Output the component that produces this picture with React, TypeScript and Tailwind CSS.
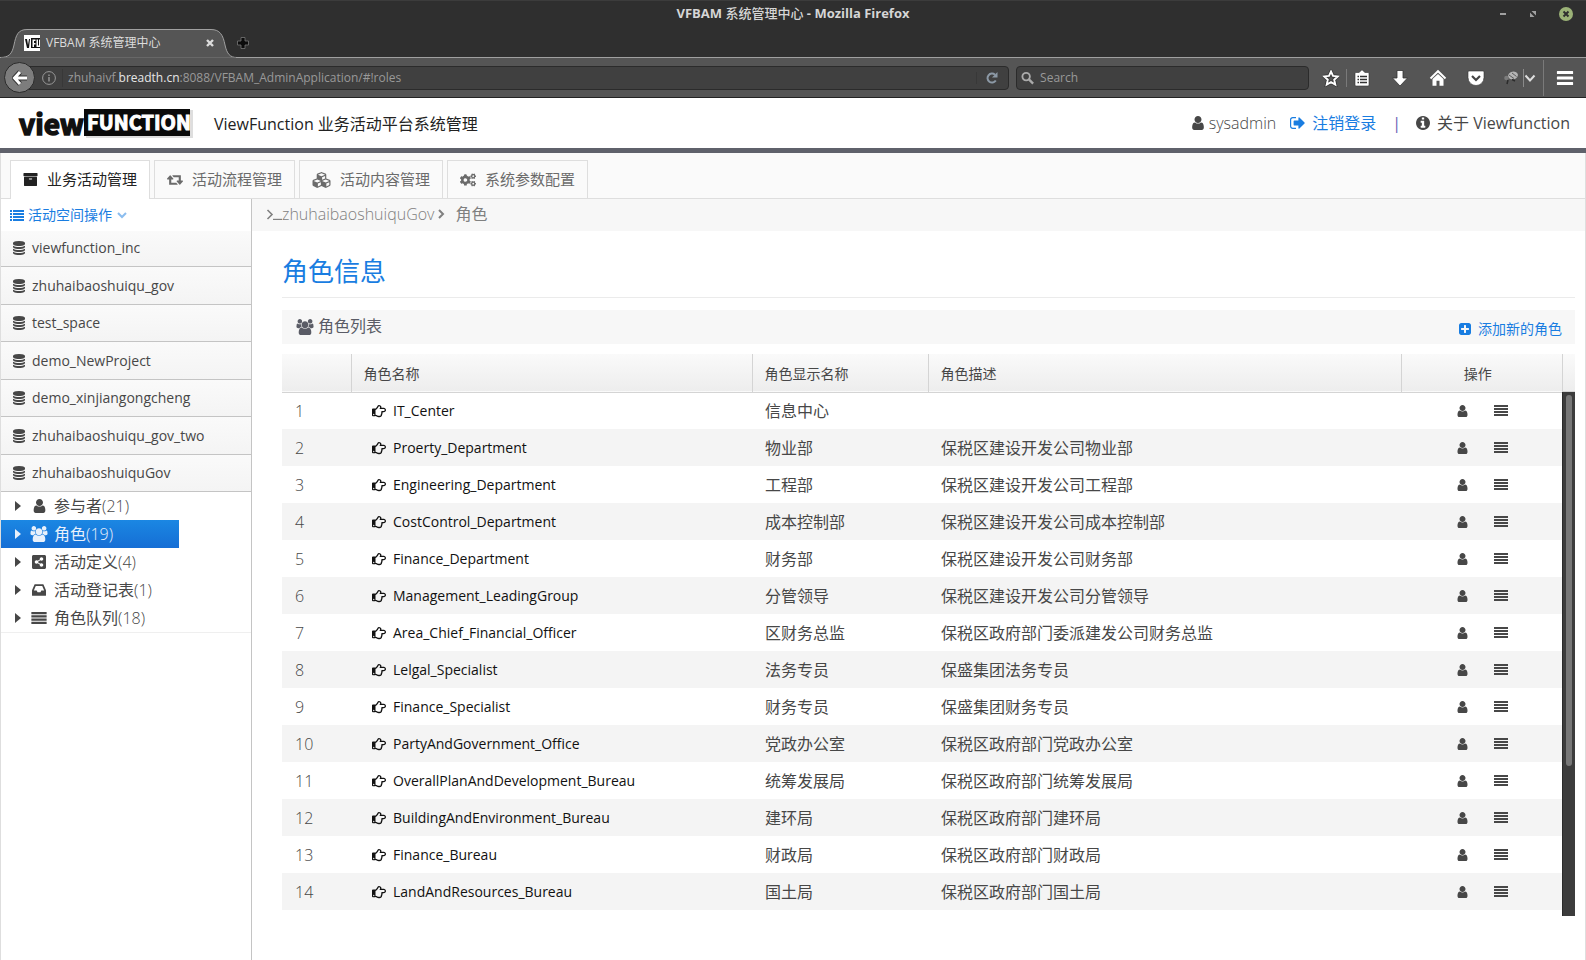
import { useState } from "react";
import type { ReactNode } from "react";
import { FaCogs, FaCubes, FaRegHandPointRight, FaShareAltSquare } from "react-icons/fa";

type IconProps = { className?: string };

function Glyph({ d, box, className }: { d: string; box: string; className?: string }) {
	return (
		<svg viewBox={box} fill="currentColor" className={className} aria-hidden="true">
			<path d={d} />
		</svg>
	);
}

const UserIcon = ({ className }: IconProps) => (
	<Glyph
		className={className}
		box="0 0 1280 1536"
		d="M1280 1271q0 109-62.5 187t-150.5 78h-854q-88 0-150.5-78t-62.5-187q0-85 8.5-160.5t31.5-152 58.5-131 94-89 134.5-34.5q131 128 313 128t313-128q76 0 134.5 34.5t94 89 58.5 131 31.5 152 8.5 160.5zm-256-887q0 159-112.5 271.5t-271.5 112.5-271.5-112.5-112.5-271.5 112.5-271.5 271.5-112.5 271.5 112.5 112.5 271.5z"
	/>
);

const UsersIcon = ({ className }: IconProps) => (
	<Glyph
		className={className}
		box="0 0 1920 1792"
		d="M593 896q-162 5-265 128H194q-82 0-138-40.5T0 865q0-353 124-353 6 0 43.5 21t97.5 42.5T384 597q67 0 133-23-5 37-5 66 0 139 81 256zm1071 637q0 120-73 189.5t-194 69.5H523q-121 0-194-69.5T256 1533q0-53 3.5-103.5t14-109T300 1212t43-97.5 62-81 85.5-53.5T602 960q10 0 43 21.5t73 48 107 48 135 21.5 135-21.5 107-48 73-48 43-21.5q61 0 111.5 20t85.5 53.5 62 81 43 97.5 26.5 108.5 14 109 3.5 103.5zM640 256q0 106-75 181t-181 75-181-75-75-181 75-181T384 0t181 75 75 181zm704 384q0 159-112.5 271.5T960 1024 688.5 911.5 576 640t112.5-271.5T960 256t271.5 112.5T1344 640zm576 225q0 78-56 118.5t-138 40.5h-134q-103-123-265-128 81-117 81-256 0-29-5-66 66 23 133 23 59 0 119-21.5t97.5-42.5 43.5-21q124 0 124 353zm-128-609q0 106-75 181t-181 75-181-75-75-181 75-181 181-75 181 75 75 181z"
	/>
);

const DatabaseIcon = ({ className }: IconProps) => (
	<Glyph
		className={className}
		box="128 0 1536 1792"
		d="M896 768q237 0 443-43t325-127v170q0 69-103 128t-280 93.5-385 34.5-385-34.5-280-93.5-103-128v-170q119 84 325 127t443 43zm0 768q237 0 443-43t325-127v170q0 69-103 128t-280 93.5-385 34.5-385-34.5-280-93.5-103-128v-170q119 84 325 127t443 43zm0-384q237 0 443-43t325-127v170q0 69-103 128t-280 93.5-385 34.5-385-34.5-280-93.5-103-128v-170q119 84 325 127t443 43zm0-1152q208 0 385 34.5t280 93.5 103 128v128q0 69-103 128t-280 93.5-385 34.5-385-34.5-280-93.5-103-128v-128q0-69 103-128t280-93.5 385-34.5z"
	/>
);

const ArchiveIcon = ({ className }: IconProps) => (
	<Glyph
		className={className}
		box="64 128 1664 1536"
		d="M1088 832q0-26-19-45t-45-19h-256q-26 0-45 19t-19 45 19 45 45 19h256q26 0 45-19t19-45zm576-192v960q0 26-19 45t-45 19h-1408q-26 0-45-19t-19-45v-960q0-26 19-45t45-19h1408q26 0 45 19t19 45zm64-448v256q0 26-19 45t-45 19h-1536q-26 0-45-19t-19-45v-256q0-26 19-45t45-19h1536q26 0 45 19t19 45z"
	/>
);

const RetweetIcon = ({ className }: IconProps) => (
	<Glyph
		className={className}
		box="0 384 1920 1152"
		d="M1280 1504q0 13-9.5 22.5t-22.5 9.5h-960q-8 0-13.5-2t-9-7-5.5-8-3-11.5-1-11.5v-600h-192q-26 0-45-19t-19-45q0-24 15-41l320-384q19-22 49-22t49 22l320 384q15 17 15 41 0 26-19 45t-45 19h-192v384h576q16 0 25 11l160 192q7 10 7 21zm640-416q0 24-15 41l-320 384q-20 23-49 23t-49-23l-320-384q-15-17-15-41 0-26 19-45t45-19h192v-384h-576q-16 0-25-12l-160-192q-7-9-7-20 0-13 9.5-22.5t22.5-9.5h960q8 0 13.5 2t9 7 5.5 8 3 11.5 1 11.5v600h192q26 0 45 19t19 45z"
	/>
);

const InboxIcon = ({ className }: IconProps) => (
	<Glyph
		className={className}
		box="0 256 1536 1280"
		d="M1023 960h316q-1-3-2.5-8.5t-2.5-7.5l-212-496h-708l-212 496q-1 3-2.5 8.5t-2.5 7.5h316l95 192h320zm513 30v482q0 26-19 45t-45 19h-1408q-26 0-45-19t-19-45v-482q0-62 25-123l238-552q10-25 36.5-42t52.5-17h832q26 0 52.5 17t36.5 42l238 552q25 61 25 123z"
	/>
);

const SignOutIcon = ({ className }: IconProps) => (
	<Glyph
		className={className}
		box="96 256 1536 1280"
		d="M704 1440q0 4 1 20t.5 26.5-3 23.5-10 19.5-20.5 6.5h-320q-119 0-203.5-84.5t-84.5-203.5v-704q0-119 84.5-203.5t203.5-84.5h320q13 0 22.5 9.5t9.5 22.5q0 4 1 20t.5 26.5-3 23.5-10 19.5-20.5 6.5h-320q-66 0-113 47t-47 113v704q0 66 47 113t113 47h312l11.5 1 11.5 3 8 5.5 7 9 2 13.5zm928-544q0 26-19 45l-544 544q-19 19-45 19t-45-19-19-45v-288h-448q-26 0-45-19t-19-45v-384q0-26 19-45t45-19h448v-288q0-26 19-45t45-19 45 19l544 544q19 19 19 45z"
	/>
);

const InfoIcon = ({ className }: IconProps) => (
	<Glyph
		className={className}
		box="128 128 1536 1536"
		d="M1152 1376v-160q0-14-9-23t-23-9h-96v-512q0-14-9-23t-23-9h-320q-14 0-23 9t-9 23v160q0 14 9 23t23 9h96v320h-96q-14 0-23 9t-9 23v160q0 14 9 23t23 9h448q14 0 23-9t9-23zm-128-896v-160q0-14-9-23t-23-9h-192q-14 0-23 9t-9 23v160q0 14 9 23t23 9h192q14 0 23-9t9-23zm640 416q0 209-103 385.5t-279.5 279.5-385.5 103-385.5-103-279.5-279.5-103-385.5 103-385.5 279.5-279.5 385.5-103 385.5 103 279.5 279.5 103 385.5z"
	/>
);

const PlusSquareIcon = ({ className }: IconProps) => (
	<Glyph
		className={className}
		box="128 128 1536 1536"
		d="M1408 960v-128q0-26-19-45t-45-19h-320v-320q0-26-19-45t-45-19h-128q-26 0-45 19t-19 45v320h-320q-26 0-45 19t-19 45v128q0 26 19 45t45 19h320v320q0 26 19 45t45 19h128q26 0 45-19t19-45v-320h320q26 0 45-19t19-45zm256-544v960q0 119-84.5 203.5t-203.5 84.5h-960q-119 0-203.5-84.5t-84.5-203.5v-960q0-119 84.5-203.5t203.5-84.5h960q119 0 203.5 84.5t84.5 203.5z"
	/>
);

const LinesIcon = ({ className }: IconProps) => (
	<Glyph className={className} box="0 0 14 11" d="M0 0h14v2H0zM0 3h14v2H0zM0 6h14v2H0zM0 9h14v2H0z" />
);

const ListIcon = ({ className }: IconProps) => (
	<Glyph
		className={className}
		box="0 0 14 11"
		d="M0 0h2v2H0zM3 0h11v2H3zM0 3h2v2H0zM3 3h11v2H3zM0 6h2v2H0zM3 6h11v2H3zM0 9h2v2H0zM3 9h11v2H3z"
	/>
);

const CaretIcon = ({ className }: IconProps) => <Glyph className={className} box="0 0 6 10" d="M0 0l6 5-6 5z" />;

function Angle({ className, d }: { className?: string; d: string }) {
	return (
		<svg viewBox="0 0 10 10" fill="none" stroke="currentColor" strokeWidth="2" className={className} aria-hidden="true">
			<path d={d} />
		</svg>
	);
}

function Logo() {
	return (
		<svg viewBox="0 0 176 34" className="h-[34px] w-[176px] overflow-visible" role="img" aria-label="viewFUNCTION">
			<rect x="68" y="4" width="107" height="28" fill="#dedede" />
			<rect x="66" y="3" width="106" height="27" fill="#0a0a0a" />
			<g fontFamily="'Noto Sans CJK SC', 'Liberation Sans', sans-serif" fontWeight="700">
				<text x="1" y="29" fontSize="28" fill="#111" stroke="#111" strokeWidth="1.5">
					view
				</text>
				<text x="69" y="24" fontSize="20" fill="#fff" stroke="#fff" strokeWidth="1">
					FUNCTION
				</text>
			</g>
		</svg>
	);
}

function BrowserChrome() {
	return (
		<div className="bg-[#2f2f2f] border-t border-[#3c3c3c] text-[12px]">
			<div className="relative flex h-7 items-center justify-end px-[13px] pb-[3px]">
				<h1 className="pointer-events-none absolute inset-x-0 text-center text-[13px] font-bold text-[#d6d6d6]">
					VFBAM <span className="font-medium">系统管理中心</span> - Mozilla Firefox
				</h1>
				<div className="flex items-center gap-[22px] text-[#a0a0a0]">
					<button type="button" aria-label="Minimize">
						<svg viewBox="0 0 8 8" className="size-2">
							<path d="M1 3h6v2H1z" fill="currentColor" />
						</svg>
					</button>
					<button type="button" aria-label="Restore">
						<svg viewBox="0 0 8 8" className="size-2">
							<path d="M2.500 1H7v4.500zM1 2.500L5.500 7H1z" fill="currentColor" />
						</svg>
					</button>
					<button type="button" aria-label="Close">
						<svg viewBox="0 0 14 14" className="size-[14px]">
							<circle cx="7" cy="7" r="7" fill="#9bb277" />
							<path d="M4.500 4.500l5 5m0-5l-5 5" stroke="#2f2f2f" strokeWidth="2" />
						</svg>
					</button>
				</div>
			</div>

			<div className="flex h-[29px] items-end border-b border-[#a0a0a0]">
				<div className="relative -mb-px h-[29px] w-[237px]">
					<svg viewBox="0 0 237 29" className="absolute inset-0 h-full w-full" aria-hidden="true">
						<path
							d="M0 28.500C9 28.500 12 25 14 16C16 6 18 .5 27 .5H211C220 .5 223 6 225 16C227 25 230 28.500 237 28.500V29H0z"
							fill="#555"
							stroke="#a0a0a0"
						/>
						<path d="M1 29h235" stroke="#555" strokeWidth="1" />
					</svg>
					<div className="relative flex h-full items-center pb-[2px] pl-6 pr-[23px] text-[#dcdcdc]">
						<svg viewBox="0 0 16 16" className="size-4" aria-hidden="true">
							<path d="M0 0h16v16H0z" fill="#fff" />
							<path d="M1 4h2l1 6 1-6h1L5 13H3zM7 3h9v10H7z" fill="#111" />
							<path d="M8.500 4.500h3v1.500h-1.500v2h1.500v1.500h-1.500V12H8.500zM12.500 4.500H14V10.500h1V4.500h1V12h-3.500z" fill="#fff" />
						</svg>
						<span className="ml-[6px] flex-1">VFBAM 系统管理中心</span>
						<button type="button" aria-label="Close tab">
							<svg viewBox="0 0 8 8" className="size-2">
								<path d="M1 1l6 6m0-6L1 7" stroke="#dcdcdc" strokeWidth="2.400" />
							</svg>
						</button>
					</div>
				</div>
				<button type="button" aria-label="New tab" className="mb-2">
					<svg viewBox="0 0 12 12" className="size-3 overflow-visible">
						<path d="M4 .5h4V4h3.500v4H8v3.500H4V8H.5V4H4z" fill="#0c0c0c" stroke="#777" strokeWidth=".8" />
					</svg>
				</button>
			</div>

			<nav className="flex h-10 items-center border-b border-[#232323] bg-[#555] pl-1 pr-3">
				<button
					type="button"
					aria-label="Back"
					className="z-10 flex size-[31px] shrink-0 items-center justify-center rounded-full border border-[#2b2b2b] bg-[#7d7d7d]"
				>
					<svg viewBox="0 0 16 16" className="size-4">
						<path d="M8 2L2.500 8l5.500 6M2.500 8H15" fill="none" stroke="#333" strokeWidth="5" />
						<path d="M8 2L2.500 8l5.500 6M2.500 8H15" fill="none" stroke="#fff" strokeWidth="3" />
					</svg>
				</button>
				<div className="-ml-4 flex h-6 flex-1 items-center rounded-sm border border-[#2b2b2b] bg-[#404040] pl-[22px] pr-[10px]">
					<svg viewBox="0 0 14 14" className="size-[14px] shrink-0" fill="none" stroke="#999">
						<circle cx="7" cy="7" r="6.400" />
						<path d="M7 6v4.500M7 3.500v1.400" strokeWidth="1.400" />
					</svg>
					<div
						role="textbox"
						aria-label="Address"
						contentEditable
						suppressContentEditableWarning
						className="ml-[6px] flex-1 border-l border-[#383838] pl-[5px] text-[#999] outline-none"
					>
						zhuhaivf.<span className="text-[#e6e6e6]">breadth.cn</span>:8088/VFBAM_AdminApplication/#!roles
					</div>
					<button type="button" aria-label="Reload" className="border-l border-[#383838] pl-[9px]">
						<svg viewBox="0 0 12 12" className="size-3">
							<path d="M9.800 8.500A4.500 4.500 0 1 1 9 2.700" fill="none" stroke="#8c99a6" strokeWidth="2" />
							<path d="M11.500 0v5.500H6z" fill="#8c99a6" />
						</svg>
					</button>
				</div>
				<label className="ml-[7px] flex h-6 w-[293px] items-center rounded-sm border border-[#2b2b2b] bg-[#404040] px-1">
					<svg viewBox="0 0 14 14" className="size-[14px]" fill="none" stroke="#aaa" strokeWidth="2">
						<circle cx="5.500" cy="5.500" r="4" />
						<path d="M8.500 8.500L13 13" strokeWidth="2.500" />
					</svg>
					<input
						type="text"
						aria-label="Search"
						placeholder="Search"
						className="ml-[6px] w-full bg-transparent text-[#ddd] outline-none placeholder:text-[#999]"
					/>
				</label>
				<div className="ml-[13px] flex items-center text-white">
					<button type="button" aria-label="Bookmark this page">
						<svg viewBox="0 0 18 18" className="size-[18px]">
							<path
								d="M9 2.500l2 4.400 4.900.5-3.700 3.300 1.100 4.900L9 13.100l-4.300 2.500 1.100-4.900L2.100 7.400l4.900-.5z"
								fill="none"
								stroke="#333"
								strokeWidth="3.400"
							/>
							<path
								d="M9 2.500l2 4.400 4.900.5-3.700 3.300 1.100 4.900L9 13.100l-4.300 2.500 1.100-4.900L2.100 7.400l4.900-.5z"
								fill="none"
								stroke="currentColor"
								strokeWidth="1.900"
							/>
						</svg>
					</button>
					<span className="mx-[6px] h-[18px] w-px bg-[#7a7a7a]" />
					<button type="button" aria-label="Bookmarks">
						<svg viewBox="0 0 18 18" className="size-[18px]">
							<path
								d="M3 3.500h3L9 .8l3 2.700h3q1 0 1 1V16q0 1-1 1H3q-1 0-1-1V4.500q0-1 1-1z"
								fill="currentColor"
								stroke="#333"
								strokeWidth=".6"
							/>
							<path d="M4.500 7.500H6m1 0h7M4.500 10.500H6m1 0h7M4.500 13.500H6m1 0h7" stroke="#333" strokeWidth="1.400" />
						</svg>
					</button>
					<button type="button" aria-label="Downloads" className="ml-5">
						<svg viewBox="0 0 18 18" className="size-[18px]">
							<path d="M6 1.500h6V9h4.500L9 17 1.500 9H6z" fill="currentColor" stroke="#333" strokeWidth=".8" />
						</svg>
					</button>
					<button type="button" aria-label="Home" className="ml-5">
						<svg viewBox="0 0 18 18" className="size-[18px]">
							<path d="M1.500 9.500L9 2.200l7.500 7.300" fill="none" stroke="currentColor" strokeWidth="1.900" />
							<path d="M3.500 10L9 5l5.500 5v6.700H10.500v-5h-3v5h-4z" fill="currentColor" />
						</svg>
					</button>
					<button type="button" aria-label="Pocket" className="ml-5">
						<svg viewBox="0 0 18 18" className="size-[18px]">
							<path d="M2 2h14q1 0 1 1v5.500a8 8 0 0 1-16 0V3q0-1 1-1z" fill="currentColor" stroke="#333" strokeWidth=".6" />
							<path d="M5 7l4 4 4-4" fill="none" stroke="#444" strokeWidth="2.200" />
						</svg>
					</button>
					<button type="button" aria-label="Add-on" className="ml-[18px]">
						<svg viewBox="0 0 16 16" className="size-4">
							<ellipse cx="10" cy="5.500" rx="5" ry="3.800" fill="#b5b5b5" transform="rotate(-15 10 5.500)" />
							<path d="M6 5l5 3.500M9 3l4.500 3.500" stroke="#5c5c5c" />
							<circle cx="3.500" cy="8" r="2.300" fill="#7c7c7c" />
							<path d="M5 10l-1 4M9 9.500l3 1.500" stroke="#2b2b2b" strokeWidth="1.500" />
						</svg>
					</button>
					<span className="ml-1 h-[18px] w-px bg-[#8a8a8a]" />
					<button type="button" aria-label="Add-on menu">
						<svg viewBox="0 0 12 12" className="size-3" fill="none" stroke="#dedede" strokeWidth="2">
							<path d="M1.500 3.500L6 8.500l4.500-5" />
						</svg>
					</button>
					<span className="ml-[7px] h-9 w-px bg-[#7a7a7a]" />
					<button type="button" aria-label="Menu" className="ml-3">
						<svg viewBox="0 0 18 16" className="h-4 w-[18px]">
							<path
								d="M1.500 1.500h15v2h-15zM1.500 7h15v2h-15zM1.500 12.500h15v2h-15z"
								fill="currentColor"
								stroke="#fff"
								strokeWidth="1.200"
								strokeLinejoin="round"
							/>
						</svg>
					</button>
				</div>
			</nav>
		</div>
	);
}

function AppHeader() {
	return (
		<header className="flex h-[55px] items-center border-b-[5px] border-[#5f616b] pl-[18px] pr-4 text-base">
			<Logo />
			<h2 className="ml-5 flex-1 pt-px text-[#222]">ViewFunction 业务活动平台系统管理</h2>
			<div className="flex items-center text-[#474747]">
				<UserIcon className="h-[14px] w-3" />
				<span className="ml-[5px] font-light">sysadmin</span>
				<a href="#logout" className="ml-[14px] flex items-center gap-[7px] text-[#197de1]">
					<SignOutIcon className="h-3 w-[15px]" />
					注销登录
				</a>
				<span className="mx-[15px] pl-px text-[#6a5fb5]">|</span>
				<a href="#about" className="flex items-center gap-[7px]">
					<InfoIcon className="size-[14px]" />
					关于 Viewfunction
				</a>
			</div>
		</header>
	);
}

const TABS: { label: string; icon: ReactNode }[] = [
	{ label: "业务活动管理", icon: <ArchiveIcon className="h-[13px] w-[15px]" /> },
	{ label: "活动流程管理", icon: <RetweetIcon className="h-[10px] w-4" /> },
	{ label: "活动内容管理", icon: <FaCubes className="h-[18px] w-[19px]" /> },
	{ label: "系统参数配置", icon: <FaCogs className="size-4" /> },
];

function MainTabs() {
	const [current, setCurrent] = useState(0);

	return (
		<div role="tablist" className="flex gap-1 border-b border-[#dedede] bg-[#fafafa] px-[9px] pt-[7px] text-[15px]">
			{TABS.map((tab, i) => (
				<button
					key={tab.label}
					type="button"
					role="tab"
					aria-selected={i === current}
					onClick={() => setCurrent(i)}
					className={
						i === current
							? "-mb-px flex h-[39px] items-center gap-[9px] border border-b-0 border-[#dedede] bg-white px-3 pb-px text-[#222]"
							: "flex h-[38px] items-center gap-[9px] border border-b-0 border-[#dedede] px-3 text-[#6b6b6b]"
					}
				>
					{tab.icon}
					{tab.label}
				</button>
			))}
		</div>
	);
}

const SPACES = [
	"viewfunction_inc",
	"zhuhaibaoshuiqu_gov",
	"test_space",
	"demo_NewProject",
	"demo_xinjiangongcheng",
	"zhuhaibaoshuiqu_gov_two",
	"zhuhaibaoshuiquGov",
];

const TREE: { label: string; count: number; icon: ReactNode }[] = [
	{ label: "参与者", count: 21, icon: <UserIcon className="h-[14px] w-[13px]" /> },
	{ label: "角色", count: 19, icon: <UsersIcon className="h-4 w-[18px]" /> },
	{ label: "活动定义", count: 4, icon: <FaShareAltSquare className="size-4" /> },
	{ label: "活动登记表", count: 1, icon: <InboxIcon className="h-3 w-[14px]" /> },
	{ label: "角色队列", count: 18, icon: <LinesIcon className="h-3 w-4" /> },
];

function Sidebar() {
	const [selected, setSelected] = useState("角色");

	return (
		<aside className="w-[251px] shrink-0 border-r border-[#c4c4c4]">
			<button type="button" className="flex h-8 items-center pl-[9px] text-sm text-[#197de1]">
				<ListIcon className="h-[11px] w-[14px]" />
				<span className="ml-1">活动空间操作</span>
				<Angle d="M1 3l4 4 4-4" className="ml-[5px] size-[10px] opacity-50" />
			</button>
			<ul className="text-sm text-[#474747]">
				{SPACES.map((space) => (
					<li
						key={space}
						className="h-[37px] border-b border-[#c4c4c4] bg-linear-to-b from-[#fafafa] to-[#f4f4f4] first:h-9 first:pb-px even:h-[38px]"
					>
						<a href={`#${space}`} className="flex h-full items-center gap-[7px] pl-3">
							<DatabaseIcon className="h-[14px] w-3" />
							{space}
						</a>
					</li>
				))}
			</ul>
			<ul className="border-b border-[#efefef] text-base text-[#474747]">
				{TREE.map((node) => (
					<li key={node.label}>
						<button
							type="button"
							onClick={() => setSelected(node.label)}
							className={
								node.label === selected
									? "flex h-7 w-[178px] items-center bg-linear-to-b from-[#1b87e3] to-[#166ed5] pl-[14px] text-[#e8f0fb]"
									: "flex h-7 w-[178px] items-center pl-[14px]"
							}
						>
							<CaretIcon className="h-[10px] w-[6px]" />
							<span className="ml-2 mr-[5px] flex w-5 justify-center">{node.icon}</span>
							<span>{node.label}</span>
							<span className="font-light">({node.count})</span>
						</button>
					</li>
				))}
			</ul>
		</aside>
	);
}

const ROLES = [
	["IT_Center", "信息中心", ""],
	["Proerty_Department", "物业部", "保税区建设开发公司物业部"],
	["Engineering_Department", "工程部", "保税区建设开发公司工程部"],
	["CostControl_Department", "成本控制部", "保税区建设开发公司成本控制部"],
	["Finance_Department", "财务部", "保税区建设开发公司财务部"],
	["Management_LeadingGroup", "分管领导", "保税区建设开发公司分管领导"],
	["Area_Chief_Financial_Officer", "区财务总监", "保税区政府部门委派建发公司财务总监"],
	["Lelgal_Specialist", "法务专员", "保盛集团法务专员"],
	["Finance_Specialist", "财务专员", "保盛集团财务专员"],
	["PartyAndGovernment_Office", "党政办公室", "保税区政府部门党政办公室"],
	["OverallPlanAndDevelopment_Bureau", "统筹发展局", "保税区政府部门统筹发展局"],
	["BuildingAndEnvironment_Bureau", "建环局", "保税区政府部门建环局"],
	["Finance_Bureau", "财政局", "保税区政府部门财政局"],
	["LandAndResources_Bureau", "国土局", "保税区政府部门国土局"],
];

function RoleTable() {
	return (
		<div className="mt-[10px] flex">
			<table className="flex-1 table-fixed border-collapse self-start text-left">
				<thead>
					<tr className="h-[38px] border-b border-[#d4d4d4] bg-linear-to-b from-[#fafafa] to-[#ededed] text-sm text-[#474747]">
						<th className="w-[69px] border-r border-[#d4d4d4]" aria-label="#" />
						<th className="w-[401px] border-r border-[#d4d4d4] pl-3 pt-[2px] font-normal">角色名称</th>
						<th className="w-[176px] border-r border-[#d4d4d4] pl-3 pt-[2px] font-normal">角色显示名称</th>
						<th className="border-r border-[#d4d4d4] pl-3 pt-[2px] font-normal">角色描述</th>
						<th className="w-[161px] pr-2 pt-[2px] text-center font-normal">操作</th>
					</tr>
				</thead>
				<tbody>
					{ROLES.map(([name, title, description], i) => (
						<tr key={name} className="h-[37px] text-base text-[#474747] even:bg-[#f4f4f4]">
							<td className="pl-[13px] font-light">{i + 1}</td>
							<td className="pl-[21px]">
								<a href={`#${name}`} className="flex items-center gap-[7px] text-sm text-[#111]">
									<FaRegHandPointRight className="size-[14px]" />
									{name}
								</a>
							</td>
							<td className="pl-[13px]">{title}</td>
							<td className="pl-[13px]">{description}</td>
							<td className="pl-px">
								<div className="flex items-center justify-center gap-[26px]">
									<button type="button" aria-label="角色成员">
										<UserIcon className="h-3 w-[11px]" />
									</button>
									<button type="button" aria-label="角色队列">
										<LinesIcon className="h-[11px] w-[14px]" />
									</button>
								</div>
							</td>
						</tr>
					))}
				</tbody>
			</table>
			<div className="w-[13px] shrink-0">
				<div className="h-[38px] border-b border-l border-[#d4d4d4] bg-linear-to-b from-[#fafafa] to-[#ededed]" />
				<div className="h-[524px] border-l border-[#2a2a2a] bg-[#3c3c3c] px-[3px] pt-[3px]">
					<div className="h-[371px] rounded-full bg-[#777]" />
				</div>
			</div>
		</div>
	);
}

function Content() {
	return (
		<main className="min-w-0 flex-1">
			<nav className="flex h-8 items-center bg-[#f7f7f7] pb-[2px] pl-[14px] text-base text-[#808080]">
				<svg viewBox="0 0 16 11" className="h-[11px] w-4" fill="none" stroke="currentColor" aria-hidden="true">
					<path d="M1.500 1L6 5.500 1.500 10" strokeWidth="1.600" />
					<path d="M7 10.400h9" strokeWidth="1.200" />
				</svg>
				<a href="#space" className="font-light">
					zhuhaibaoshuiquGov
				</a>
				<Angle d="M3 1l4 4-4 4" className="ml-[2px] size-[10px]" />
				<span className="ml-[9px]">角色</span>
			</nav>
			<div className="pl-[30px] pr-[10px]">
				<h3 className="flex h-[67px] items-center border-b border-[#ebebeb] pt-[15px] text-[26px] text-[#197de1]">
					角色信息
				</h3>
				<div className="mt-3 flex h-[34px] items-center bg-[#f7f7f7] pl-[14px] pr-[13px] text-[#5a5c66]">
					<UsersIcon className="h-4 w-[18px]" />
					<h4 className="ml-1 flex-1 pb-[2px] text-base">角色列表</h4>
					<button type="button" className="flex items-center gap-[7px] pt-1 text-sm text-[#197de1]">
						<PlusSquareIcon className="size-3" />
						添加新的角色
					</button>
				</div>
				<RoleTable />
			</div>
		</main>
	);
}

export default function App() {
	return (
		<div className="flex min-h-screen flex-col bg-white font-['Open_Sans','Noto_Sans_CJK_SC',sans-serif]">
			<BrowserChrome />
			<AppHeader />
			<div className="flex flex-1 flex-col border-x border-[#dedede]">
				<MainTabs />
				<div className="flex flex-1">
					<Sidebar />
					<Content />
				</div>
			</div>
		</div>
	);
}
